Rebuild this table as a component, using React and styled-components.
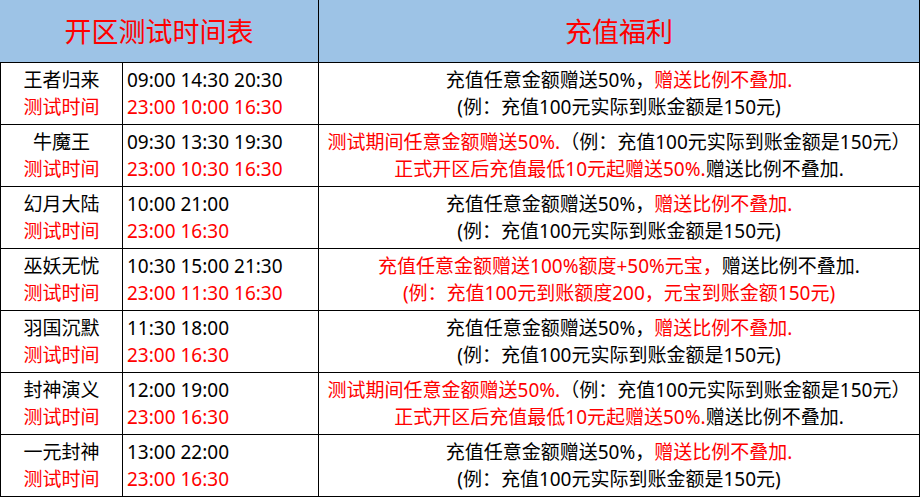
import React from "react";
import styled, { createGlobalStyle } from "styled-components";

const Global = createGlobalStyle`
  html, body { margin: 0; padding: 0; background: #ffffff; }
  body { font-family: "Noto Sans", "Noto Sans CJK SC", sans-serif; }
`;

const Table = styled.div`
  display: grid;
  grid-template-columns: 123px 196px 601px;
  width: 920px;
  color: #000;
  font-family: "Noto Sans", "Noto Sans CJK SC", sans-serif;
`;

const HeadCell = styled.div`
  box-sizing: border-box;
  height: 63px;
  background: #9dc3e6;
  border-right: 1px solid #000;
  border-bottom: 1px solid #000;
  display: flex;
  align-items: center;
  justify-content: center;
  color: #ff0000;
  font-size: 27px;
  line-height: 1;
  grid-column: ${(p) => p.$span || "auto"};
`;

const Cell = styled.div`
  box-sizing: border-box;
  height: 62px;
  border-right: 1px solid #000;
  border-bottom: 1px solid #000;
  border-left: ${(p) => (p.$first ? "1px solid #000" : "none")};
  display: flex;
  flex-direction: column;
  justify-content: center;
  align-items: ${(p) => (p.$align === "left" ? "flex-start" : "center")};
  padding-left: ${(p) => (p.$align === "left" ? "4px" : "0")};
  font-size: 19px;
  line-height: 27px;
  white-space: nowrap;
`;

const Line = styled.div`
  color: ${(p) => (p.$red ? "#ff0000" : "#000")};
`;

const Red = styled.span`
  color: #ff0000;
`;

const Black = styled.span`
  color: #000;
`;

const benefitA = [
  <Line key="a">
    充值任意金额赠送50%，<Red>赠送比例不叠加.</Red>
  </Line>,
  <Line key="b">(例：充值100元实际到账金额是150元)</Line>,
];

const benefitB = [
  <Line key="a" $red>
    测试期间任意金额赠送50%.<Black>（例：充值100元实际到账金额是150元）</Black>
  </Line>,
  <Line key="b" $red>
    正式开区后充值最低10元起赠送50%.<Black>赠送比例不叠加.</Black>
  </Line>,
];

const benefitC = [
  <Line key="a" $red>
    充值任意金额赠送100%额度+50%元宝，<Black>赠送比例不叠加.</Black>
  </Line>,
  <Line key="b" $red>
    (例：充值100元到账额度200，元宝到账金额150元)
  </Line>,
];

const rows = [
  { name: "王者归来", t1: "09:00 14:30 20:30", t2: "23:00 10:00 16:30", b: benefitA },
  { name: "牛魔王", t1: "09:30 13:30 19:30", t2: "23:00 10:30 16:30", b: benefitB },
  { name: "幻月大陆", t1: "10:00 21:00", t2: "23:00 16:30", b: benefitA },
  { name: "巫妖无忧", t1: "10:30 15:00 21:30", t2: "23:00 11:30 16:30", b: benefitC },
  { name: "羽国沉默", t1: "11:30 18:00", t2: "23:00 16:30", b: benefitA },
  { name: "封神演义", t1: "12:00 19:00", t2: "23:00 16:30", b: benefitB },
  { name: "一元封神", t1: "13:00 22:00", t2: "23:00 16:30", b: benefitA },
];

export default function App() {
  return (
    <>
      <Global />
      <Table>
        <HeadCell $span="span 2">开区测试时间表</HeadCell>
        <HeadCell>充值福利</HeadCell>
        {rows.map((r) => (
          <React.Fragment key={r.name}>
            <Cell $first>
              <Line>{r.name}</Line>
              <Line $red>测试时间</Line>
            </Cell>
            <Cell $align="left">
              <Line>{r.t1}</Line>
              <Line $red>{r.t2}</Line>
            </Cell>
            <Cell>{r.b}</Cell>
          </React.Fragment>
        ))}
      </Table>
    </>
  );
}
